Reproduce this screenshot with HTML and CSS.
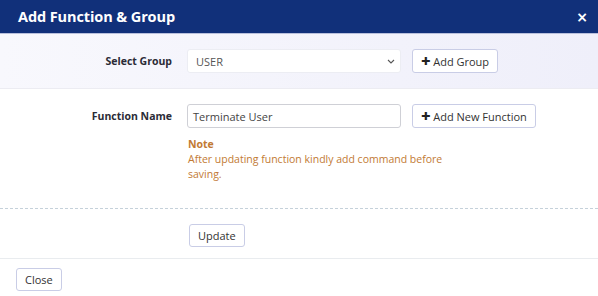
FILE: index.html
```html
<!DOCTYPE html>
<html lang="en">
<head>
    <meta charset="UTF-8">
    <meta name="viewport" content="width=device-width, initial-scale=1.0">
    <title>Add Function &amp; Group</title>
    <link rel="stylesheet" href="styles.css">
</head>
<body>
    <div class="modal">
        <div class="modal-header">
            <h2>Add Function &amp; Group</h2>
            <button class="close-x" aria-label="Close">&times;</button>
        </div>

        <div class="section section-group">
            <div class="form-row">
                <label class="form-label">Select Group</label>
                <div class="form-control select-box">
                    <span>USER</span>
                    <svg class="chevron" width="8" height="5" viewBox="0 0 8 5">
                        <path d="M1 1l3 3 3-3" fill="none" stroke="#555" stroke-width="1.1"/>
                    </svg>
                </div>
                <button class="btn btn-add"><span class="plus">&#10010;</span>Add Group</button>
            </div>
        </div>

        <div class="section section-function">
            <div class="form-row">
                <label class="form-label">Function Name</label>
                <div class="form-control input-box">Terminate User</div>
                <button class="btn btn-add"><span class="plus">&#10010;</span>Add New Function</button>
            </div>
            <div class="note">
                <strong>Note</strong>
                <p>After updating function kindly add command before saving.</p>
            </div>
        </div>

        <div class="section section-actions">
            <button class="btn">Update</button>
        </div>

        <div class="modal-footer">
            <button class="btn">Close</button>
        </div>
    </div>
</body>
</html>
```

FILE: styles.css
```css
:root {
    --header-color: #11307a;
    --text-color: #2b2b36;
    --text-muted: #555555;
    --note-color: #c27a34;
    --border-color: #dcdde3;
    --btn-border: #c9cde6;
}

* {
    margin: 0;
    padding: 0;
    box-sizing: border-box;
}

body {
    font-family: 'Open Sans', 'Noto Sans', sans-serif;
    background: #ffffff;
    color: var(--text-color);
    font-size: 11px;
}

.modal {
    width: 598px;
    display: flex;
    flex-direction: column;
}

.modal > * {
    flex-shrink: 0;
}

.modal-header {
    height: 34px;
    background: var(--header-color);
    border-bottom: 1px solid #b9c0dc;
    display: flex;
    align-items: center;
    justify-content: space-between;
    padding: 0 10px 0 18px;
}

.modal-header h2 {
    color: #ffffff;
    font-size: 14.5px;
    font-weight: 700;
    letter-spacing: -0.1px;
}

.close-x {
    background: none;
    border: none;
    color: #ffffff;
    font-size: 14px;
    font-weight: 700;
    font-family: 'DejaVu Sans', sans-serif;
    line-height: 1;
}

.section {
    padding-top: 15px;
}

.section-group {
    height: 55px;
    background: linear-gradient(90deg, #f8f8fd 0%, #efeffa 100%);
    border-bottom: 1px solid #ececf2;
}

.section-function {
    height: 120px;
    border-bottom: 1px dashed #c5d1da;
}

.section-actions {
    height: 50px;
    padding-left: 189px;
    border-bottom: 1px solid #e9ecef;
}

.form-row {
    display: flex;
    align-items: center;
    gap: 11px;
}

.form-label {
    width: 172px;
    margin-right: 4px;
    text-align: right;
    font-weight: 700;
    font-size: 10.5px;
    color: var(--text-color);
}

.form-control {
    width: 214px;
    height: 24px;
    background: #ffffff;
    border-radius: 3px;
    display: flex;
    align-items: center;
    justify-content: space-between;
    font-size: 11px;
    color: var(--text-muted);
}

.select-box {
    padding: 0 5px 0 8px;
    border: 1px solid #ecedf3;
}

.input-box {
    padding: 0 5px;
    border: 1px solid #cfd0d6;
    color: #444;
}

.btn {
    font-family: inherit;
    font-size: 11px;
    color: #333333;
    background: #ffffff;
    border: 1px solid var(--btn-border);
    border-radius: 3px;
    height: 23px;
    padding: 0 8px;
    display: inline-flex;
    align-items: center;
}

.btn-add {
    height: 24px;
}

.plus {
    font-family: 'DejaVu Sans', sans-serif;
    font-size: 11px;
    font-weight: 700;
    margin-right: 3px;
    color: #222;
}

.note {
    margin-left: 188px;
    margin-top: 9px;
    color: var(--note-color);
    font-size: 10.5px;
    line-height: 15px;
}

.note p {
    width: 270px;
}

.modal-footer {
    padding: 9px 16px;
}
```
